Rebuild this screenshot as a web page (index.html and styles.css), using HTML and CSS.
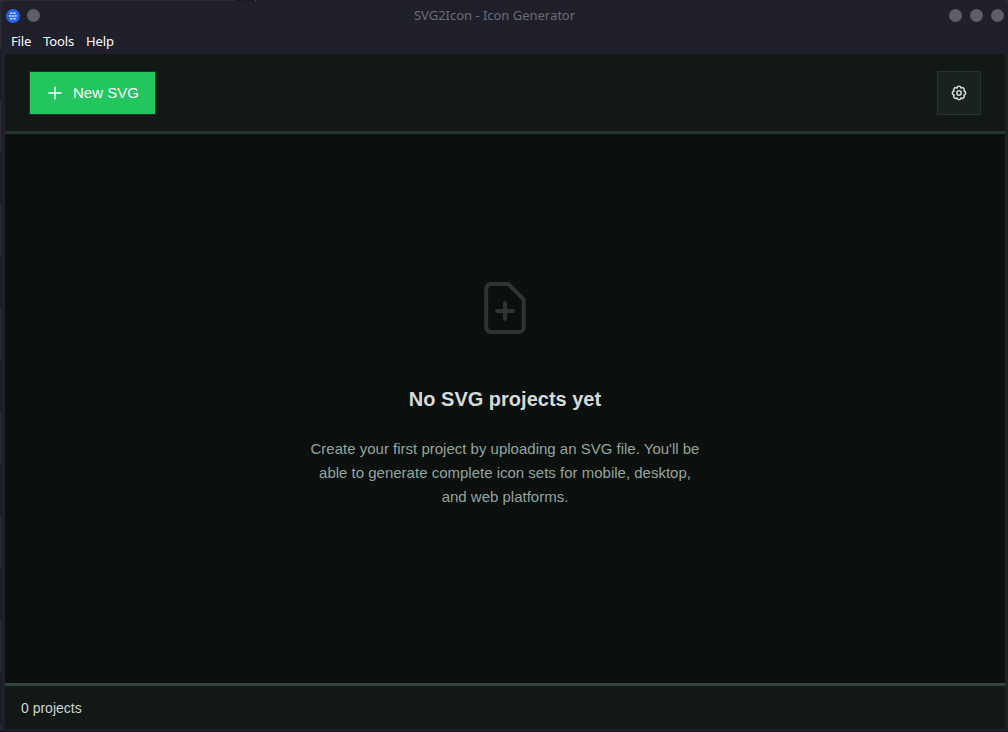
FILE: index.html
```html
<!DOCTYPE html>
<html lang="en">
<head>
<meta charset="utf-8">
<title>SVG2Icon - Icon Generator</title>
<link rel="stylesheet" href="styles.css">
</head>
<body>
<div class="window">
  <div class="titlebar">
    <div class="title-left">
      <svg class="app-icon" viewBox="0 0 14 14"><circle cx="7" cy="7" r="6.9" fill="#2563eb"/><g fill="#d5e2ff"><rect x="4.2" y="3.4" width="2.2" height="1.6"/><rect x="7.4" y="3.4" width="2.2" height="1.6"/><rect x="3.2" y="6" width="2" height="1.8"/><rect x="6" y="6.3" width="1.8" height="1.6"/><rect x="8.6" y="6" width="2" height="1.8"/><rect x="4.2" y="8.9" width="2.2" height="1.6"/><rect x="7.4" y="8.9" width="2.2" height="1.6"/></g></svg>
      <span class="dot"></span>
    </div>
    <div class="title">SVG2Icon - Icon Generator</div>
    <div class="title-right"><span class="dot"></span><span class="dot"></span><span class="dot"></span></div>
  </div>
  <nav class="menu"><span>File</span><span>Tools</span><span>Help</span></nav>
  <div class="app">
    <header class="toolbar">
      <button class="new-btn">
        <svg class="plus" viewBox="0 0 14 14"><path d="M7 .5v13M.5 7h13" stroke="currentColor" stroke-width="1.5"/></svg>
        <span>New SVG</span>
      </button>
      <button class="settings-btn" aria-label="Settings">
        <svg class="gear" viewBox="0 0 16 16" fill="none" stroke="currentColor" stroke-width="1.5" stroke-linejoin="round"><path d="M5.97 3.1A2.05 2.05 0 0 1 10.03 3.1A2.05 2.05 0 0 1 12.9 5.97A2.05 2.05 0 0 1 12.9 10.03A2.05 2.05 0 0 1 10.03 12.9A2.05 2.05 0 0 1 5.97 12.9A2.05 2.05 0 0 1 3.1 10.03A2.05 2.05 0 0 1 3.1 5.97A2.05 2.05 0 0 1 5.97 3.1Z"/><circle cx="8" cy="8" r="2.2"/></svg>
      </button>
    </header>
    <main class="empty">
      <svg class="file-icon" viewBox="0 0 64 64" fill="none" stroke="currentColor" stroke-width="4" stroke-linecap="round" stroke-linejoin="round"><path d="M18.2 8H35.2L50.7 23.5V51a5 5 0 0 1-5 5H18.2a5 5 0 0 1-5-5V13a5 5 0 0 1 5-5ZM32 27V43M24 35H40"/></svg>
      <h1 class="heading">No SVG projects yet</h1>
      <p class="description">Create your first project by uploading an SVG file. You'll be able to generate complete icon sets for mobile, desktop, and web platforms.</p>
    </main>
    <footer class="status">0 projects</footer>
  </div>
</div>
</body>
</html>
```
FILE: styles.css
```css
* { box-sizing: border-box; }
body {
  margin: 0;
  height: 732px;
  padding: 1px 0 1px 1px;
  overflow: hidden;
  background: linear-gradient(90deg, #2b2c38 0 236px, #1b1b22 236px 255px, #55565e 255px 256px, #202224 256px) 0 0 / 100% 1px no-repeat,
    linear-gradient(#1b1520 0 0) 0 100% / 100% 2px no-repeat,
    repeating-linear-gradient(#2b2c38 0 49px, #1b1b25 49px 101px, #2b2c38 101px 104px);
  font-family: "Liberation Sans", Arial, sans-serif;
}
.window {
  display: flex;
  flex-direction: column;
  height: 730px;
  padding: 0 3px 2px 4px;
  border-radius: 5px 5px 3px 3px;
  background: #20202a;
}
.titlebar {
  display: grid;
  grid-template-columns: 1fr auto 1fr;
  align-items: center;
  height: 29px;
  margin-right: -3px;
  padding: 0 4px 0 1px;
  font: 13px "Noto Sans", sans-serif;
}
.title { color: #6b6b76; margin: 0 21px 2px 0; letter-spacing: -0.02px; }
.title-left, .title-right { display: flex; align-items: center; gap: 7px; }
.title-right { justify-content: flex-end; gap: 8px; }
.app-icon { width: 14px; height: 14px; }
.dot { width: 13px; height: 13px; border-radius: 50%; background: #5e5e69; }
.menu {
  display: flex;
  gap: 12px;
  height: 24px;
  padding-left: 6px;
  color: #fcfcfc;
  font: 13px/22px "Noto Sans", sans-serif;
  letter-spacing: -0.15px;
}
.app { display: flex; flex: 1; flex-direction: column; background: #0b0f0e; }
.toolbar {
  display: flex;
  align-items: center;
  justify-content: space-between;
  height: 80px;
  padding: 0 24px;
  border-bottom: 3px solid #243530;
  background: #121816;
}
.new-btn {
  display: flex;
  align-items: center;
  gap: 11px;
  width: 127px;
  height: 44px;
  padding: 0 0 0 18px;
  border: 1px solid #1e3029;
  background: #22c55e;
  color: #fff;
  font: 15px "Liberation Sans", Arial, sans-serif;
}
.plus { width: 14px; height: 14px; }
.settings-btn {
  display: grid;
  place-items: center;
  width: 44px;
  height: 44px;
  padding: 0;
  border: 1px solid #24352f;
  background: #1a2220;
  color: #d0dbd6;
}
.gear { width: 16px; height: 16px; }
.empty {
  display: flex;
  flex: 1;
  flex-direction: column;
  align-items: center;
  padding-top: 142px;
}
.file-icon { width: 64px; height: 64px; color: #2f3433; }
.heading { margin: 47px 0 0; color: #d5dbd8; font-size: 20px; line-height: 24px; }
.description {
  width: 400px;
  margin: 26px 0 0;
  color: #93a59d;
  font-size: 15px;
  line-height: 24px;
  text-align: center;
}
.status {
  height: 46px;
  padding-left: 16px;
  border-top: 3px solid #2f453e;
  background: #121816;
  color: #cbd5d0;
  font-size: 14px;
  line-height: 44px;
}
```
